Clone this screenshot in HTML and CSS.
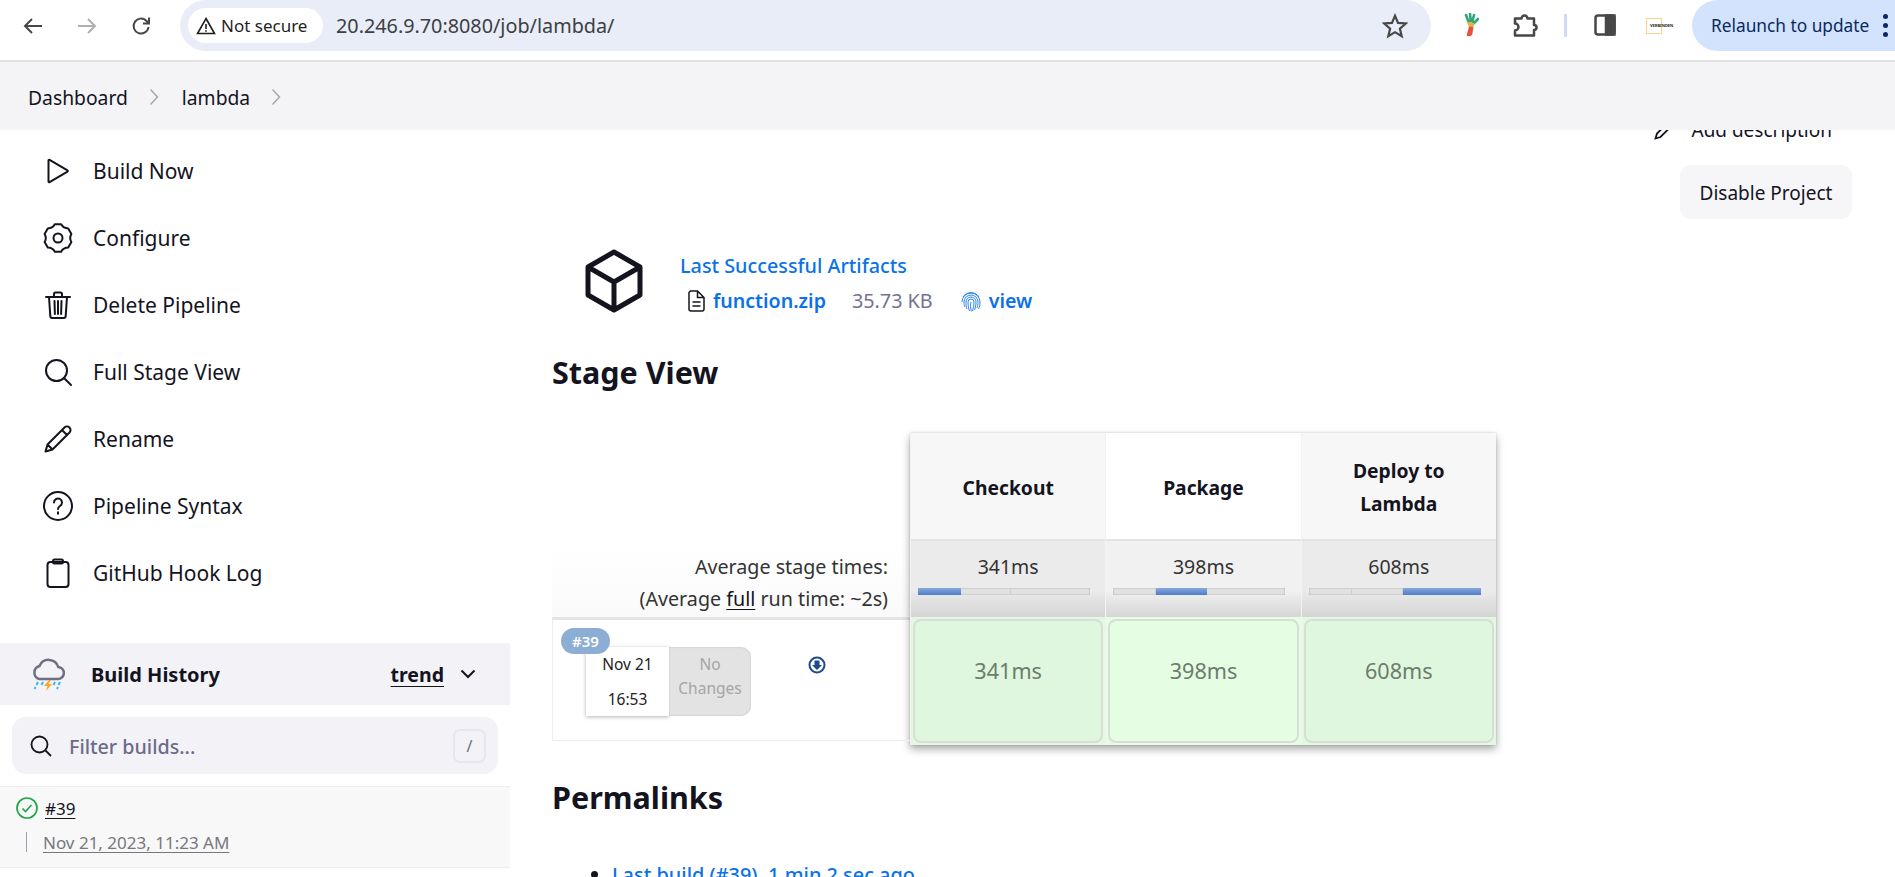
FILE: index.html
```html
<!DOCTYPE html>
<html lang="en">
  <head>
    <meta charset="UTF-8" />
    <meta name="viewport" content="width=device-width, initial-scale=1.0" />
    <title>lambda - Jenkins</title>
    <link rel="stylesheet" href="styles.css">
  </head>
  <body>
    <header class="toolbar">
      <svg class="tool-btn" viewBox="0 0 24 24"><path d="M21 12H4M11 5l-7 7 7 7" /></svg>
      <svg class="tool-btn tool-btn-off" viewBox="0 0 24 24"><path d="M3 12h17M13 5l7 7-7 7" /></svg>
      <svg class="tool-btn" viewBox="0 0 24 24"><path d="M19.5 13a7.5 7.5 0 1 1-2.2-6.3L20 9.5M20 3.5v6h-6" /></svg>
      <div class="omnibox">
        <div class="chip">
          <svg class="chip-icon" viewBox="0 0 20 20"><path d="M10 2.5 18.5 17.5H1.5zM10 8v5M10 14.3v1.4" /></svg>
          Not secure
        </div>
        <span class="url">20.246.9.70:8080/job/lambda/</span>
        <svg class="star" viewBox="0 0 24 24"><path d="M12 2.5l2.8 6.6 7.2.6-5.5 4.7 1.7 7-6.2-3.7-6.2 3.7 1.7-7L2 9.7l7.2-.6z" /></svg>
      </div>
      <svg class="ext-leek" viewBox="0 0 16 24">
        <path class="leek-green" d="M3 2l3 8M7 1l1 9M11 2l-2 8M15 6l-5 5" />
        <path class="leek-yellow" d="M6 10l1 5M8 10v5M10 11l-1 4" />
        <path class="leek-red" d="M7 15l-2 7M8 15l-1 7M9 15l-1 6" />
      </svg>
      <svg class="ext-puzzle" viewBox="0 0 25 24"><path d="M2 5.500h6.500a3 3 0 0 1 6 0H21v6.500a2.500 2.500 0 0 1 0 5V22.500H2v-5a3.500 3.500 0 0 0 0-7z" /></svg>
      <span class="tool-sep"></span>
      <svg class="side-panel" viewBox="0 0 22 22"><rect x="1.500" y="1.500" width="19" height="19" rx="2.500" /><rect class="side-fill" x="12" y="1.500" width="8.500" height="19" /></svg>
      <div class="ext-connect"><span class="connect-text">VERBINDEN</span></div>
      <div class="relaunch">
        Relaunch to update
        <span class="dots"><i></i><i></i><i></i></span>
      </div>
    </header>

    <nav class="crumbs">
      <a href="#">Dashboard</a>
      <svg class="crumb-sep" viewBox="0 0 10 18"><path d="M1.500 1.500 8.500 9l-7 7.500" /></svg>
      <a href="#">lambda</a>
      <svg class="crumb-sep" viewBox="0 0 10 18"><path d="M1.500 1.500 8.500 9l-7 7.500" /></svg>
    </nav>

    <div class="layout">
      <aside class="sidebar">
        <ul class="tasks">
          <li>
            <svg class="task-icon" viewBox="0 0 30 30"><path d="M5.500 4.500v21c0 .6.6.9 1.100.6L24.500 15.600c.5-.3.5-.9 0-1.200L6.600 3.900c-.5-.3-1.100 0-1.100.6z" /></svg>
            <a href="#">Build Now</a>
          </li>
          <li>
            <svg class="task-icon" viewBox="0 0 30 30"><path d="M11.850 1.360h6.300Q20.500 5.470 25.240 5.450l3.150 5.460Q26 15 28.390 19.090l-3.150 5.460Q20.500 24.530 18.150 28.640h-6.300Q9.500 24.530 4.760 24.550l-3.150-5.460Q4 15 1.610 10.910l3.150-5.460Q9.500 5.470 11.850 1.360z" /><circle cx="15" cy="15" r="4.500" /></svg>
            <a href="#">Configure</a>
          </li>
          <li>
            <svg class="task-icon" viewBox="0 0 30 30"><path d="M3 7h24M6 7l1.300 19a2 2 0 0 0 2 2h11.400a2 2 0 0 0 2-2L24 7M11 7V4a1.500 1.500 0 0 1 1.500-1.500h5A1.500 1.500 0 0 1 19 4v3M11.500 11l.4 13M15 11v13M18.500 11l-.4 13" /></svg>
            <a href="#">Delete Pipeline</a>
          </li>
          <li>
            <svg class="task-icon" viewBox="0 0 30 30"><circle cx="13.500" cy="13.500" r="10.500" /><path d="M21 21l7 7" /></svg>
            <a href="#">Full Stage View</a>
          </li>
          <li>
            <svg class="task-icon" viewBox="0 0 30 30"><path d="M2.500 27.500l2-7L21.500 3.500a3 3 0 0 1 5 5L9.500 25.500zM4.500 20.500l5 5M19 6l5 5" /></svg>
            <a href="#">Rename</a>
          </li>
          <li>
            <svg class="task-icon" viewBox="0 0 30 30"><circle cx="15" cy="15" r="14" /><path d="M11 11.500a4 4 0 1 1 6.200 3.300c-1.400 1-2.200 1.700-2.200 3.200M15 21.300v1.400" /></svg>
            <a href="#">Pipeline Syntax</a>
          </li>
          <li>
            <svg class="task-icon" viewBox="0 0 30 30"><rect x="4.500" y="4" width="21" height="25" rx="3" /><rect x="10" y="1.500" width="10" height="4" rx="1.500" /></svg>
            <a href="#">GitHub Hook Log</a>
          </li>
        </ul>

        <div class="history-head">
          <svg class="cloud" viewBox="0 0 34 33">
            <path class="cloud-line" d="M8 21h18.500a6 6 0 0 0 .8-12A10 10 0 0 0 8.500 8 6.800 6.800 0 0 0 8 21z" />
            <path class="cloud-rain" d="M7 24l-1.500 3M4.500 29l-1 2M12 24l-1.500 3M24 24l-1.500 3M29 24l-1.500 3M27 29l-1 2" />
            <path class="cloud-bolt" d="M18 22l-5 6h3.500L15 33l6-7h-3.500L20 22z" />
          </svg>
          <span class="history-title">Build History</span>
          <a class="trend" href="#">trend</a>
          <svg class="history-caret" viewBox="0 0 16 10"><path d="M1.500 1.500 8 8l6.500-6.500" /></svg>
        </div>

        <div class="filter">
          <svg class="filter-icon" viewBox="0 0 22 22"><circle cx="9.500" cy="9.500" r="8" /><path d="M15.500 15.500l5.500 5.500" /></svg>
          <span class="filter-text">Filter builds...</span>
          <span class="filter-key">/</span>
        </div>

        <div class="build-row">
          <div class="build-top">
            <svg class="build-status" viewBox="0 0 22 22"><circle cx="11" cy="11" r="10" /><path d="M6.500 11.500l3 3 6-6.500" /></svg>
            <a class="build-num" href="#">#39</a>
          </div>
          <div class="build-bottom">
            <span class="build-date">Nov 21, 2023, 11:23 AM</span>
          </div>
        </div>
      </aside>

      <main class="content">
        <div class="actions">
          <a class="add-desc" href="#">
            <svg class="add-desc-icon" viewBox="0 0 20 20"><path d="M1.500 18.500l1.500-5L14 2.500a2.500 2.500 0 0 1 3.500 3.500L6.500 17z" /></svg>
            Add description
          </a>
          <a class="btn" href="#">Disable Project</a>
        </div>

        <section class="artifacts">
          <svg class="cube" viewBox="0 0 58 64"><path d="M29 3 55 18v28L29 61 3 46V18zM3 18l26 15 26-15M29 33v28" /></svg>
          <div>
            <a class="art-title" href="#">Last Successful Artifacts</a>
            <div class="art-file">
              <svg class="file-icon" viewBox="0 0 17 22"><path d="M2.500 1h7L16 7.500V19a2 2 0 0 1-2 2H3a2 2 0 0 1-2-2V2.500zM9.500 1v6.500H16M4.500 12h8M4.500 16h8" /></svg>
              <a class="art-link" href="#">function.zip</a>
              <span class="art-size">35.73 KB</span>
              <svg class="print-icon" viewBox="0 0 20 22">
                <path d="M2 7a9.500 9.500 0 0 1 16 0M1 12a9 9 0 0 1 18 0c0 3-.5 5-1.500 7M4 17c-1-1.500-1-3.500-1-5a7 7 0 0 1 14 0c0 2.500-.5 4.500-1 6M6 19c-1-2-1-5-1-7a5 5 0 0 1 10 0c0 3-.5 5-1.500 8M8.500 21c-1-2.500-1.500-6-1.500-9a3 3 0 0 1 6 0c0 3-.5 6-1.500 9M10.500 21.500C9.500 18 9 15 10 12" />
              </svg>
              <a class="art-link" href="#">view</a>
            </div>
          </div>
        </section>

        <h2 class="section-title">Stage View</h2>

        <section class="stage">
          <div class="stage-left">
            <div class="avg-label">
              Average stage times:<br />
              (Average <a href="#">full</a> run time: ~2s)
            </div>
            <div class="run">
              <span class="run-badge">#39</span>
              <div class="run-date">
                <span>Nov 21</span>
                <span>16:53</span>
              </div>
              <div class="run-changes">No<br />Changes</div>
              <svg class="run-dl" viewBox="0 0 18 18"><circle cx="9" cy="9" r="7.500" /><path class="run-dl-arrow" d="M6.500 4.500h5V9H14l-5 5-5-5h2.500z" /></svg>
            </div>
          </div>

          <div class="stage-grid">
            <div class="col col-odd">
              <div class="col-head">Checkout</div>
              <div class="col-avg">
                341ms
                <div class="bar">
                  <span class="bar-seg bar-on bar-w-43"></span>
                  <span class="bar-seg bar-w-50"></span>
                  <span class="bar-seg bar-fill"></span>
                </div>
              </div>
              <div class="col-cell"><span class="cell-time">341ms</span></div>
            </div>
            <div class="col col-even">
              <div class="col-head">Package</div>
              <div class="col-avg">
                398ms
                <div class="bar">
                  <span class="bar-seg bar-w-43"></span>
                  <span class="bar-seg bar-on bar-w-51"></span>
                  <span class="bar-seg bar-fill"></span>
                </div>
              </div>
              <div class="col-cell"><span class="cell-time">398ms</span></div>
            </div>
            <div class="col col-odd">
              <div class="col-head">Deploy to<br />Lambda</div>
              <div class="col-avg">
                608ms
                <div class="bar">
                  <span class="bar-seg bar-w-43"></span>
                  <span class="bar-seg bar-w-51"></span>
                  <span class="bar-seg bar-on bar-fill"></span>
                </div>
              </div>
              <div class="col-cell"><span class="cell-time">608ms</span></div>
            </div>
          </div>
        </section>

        <h2 class="section-title permalinks-title">Permalinks</h2>
        <ul class="permalinks">
          <li><a href="#">Last build (#39), 1 min 2 sec ago</a></li>
        </ul>
      </main>
    </div>
  </body>
</html>
```

FILE: styles.css
```css
* {
  box-sizing: border-box;
}
html,
body {
  margin: 0;
  height: 877px;
  overflow: hidden;
}
body {
  font-family: "Noto Sans", "Open Sans", sans-serif;
  font-size: 19px;
  color: #14141f;
  background-color: #fff;
}
a {
  color: inherit;
  text-decoration: none;
}
ul {
  margin: 0;
  padding: 0;
  list-style: none;
}

/* browser toolbar */
.toolbar {
  display: flex;
  align-items: flex-start;
  height: 62px;
  padding-left: 21px;
  border-bottom: 2px solid #e1e1e1;
  overflow: hidden;
}
.tool-btn {
  flex: none;
  width: 24px;
  height: 24px;
  margin-top: 14px;
  margin-right: 30px;
  fill: none;
  stroke: #474747;
  stroke-width: 2;
}
.tool-btn-off {
  stroke: #b0b0b0;
}
.omnibox {
  flex: none;
  display: flex;
  align-items: center;
  width: 1251px;
  height: 51px;
  margin-left: -3px;
  padding-left: 8px;
  border-radius: 26px;
  background-color: #e9edf7;
}
.chip {
  display: flex;
  align-items: center;
  gap: 5px;
  width: 135px;
  height: 35px;
  padding-left: 8px;
  border-radius: 18px;
  background-color: #fff;
  font-size: 17px;
  color: #1f1f1f;
}
.chip-icon {
  flex: none;
  width: 20px;
  height: 20px;
  fill: none;
  stroke: #1f1f1f;
  stroke-width: 1.6;
}
.url {
  margin-left: 13px;
  font-size: 19.800px;
  color: #3c4043;
}
.star {
  width: 26px;
  height: 26px;
  margin-left: auto;
  margin-right: 23px;
  fill: none;
  stroke: #474747;
  stroke-width: 2;
}
.ext-leek {
  flex: none;
  width: 16px;
  height: 24px;
  margin: 13px 0 0 32px;
  fill: none;
  stroke-width: 2.600;
  stroke-linecap: round;
}
.leek-green {
  stroke: #2fa77a;
}
.leek-yellow {
  stroke: #d9b64a;
}
.leek-red {
  stroke: #e8503f;
}
.ext-puzzle {
  flex: none;
  width: 25px;
  height: 24px;
  margin: 13px 0 0 34px;
  fill: none;
  stroke: #474747;
  stroke-width: 2.500;
  stroke-linejoin: round;
}
.tool-sep {
  flex: none;
  width: 3px;
  height: 23px;
  margin: 14px 0 0 26px;
  background-color: #cfdcf8;
}
.side-panel {
  flex: none;
  width: 22px;
  height: 22px;
  margin: 14px 0 0 27px;
  fill: #fff;
  stroke: #474747;
  stroke-width: 2.500;
}
.side-fill {
  fill: #474747;
}
.ext-connect {
  flex: none;
  width: 16px;
  height: 16px;
  margin: 18px 14px 0 30px;
  border: 1px solid #fdd28a;
  white-space: nowrap;
}
.connect-text {
  display: block;
  margin: 4px 0 0 3px;
  font-size: 4px;
  line-height: 6px;
  font-weight: 700;
  color: #222;
}
.relaunch {
  flex: none;
  display: flex;
  align-items: center;
  width: 230px;
  height: 51px;
  margin-left: 16px;
  padding-left: 19px;
  border-radius: 26px;
  background-color: #d3e3fd;
  font-size: 17.300px;
  color: #0a2a5e;
}
.dots {
  display: flex;
  flex-direction: column;
  gap: 4px;
  margin-left: 14px;
}
.dots i {
  width: 5px;
  height: 5px;
  border-radius: 50%;
  background-color: #0a2a5e;
}

/* breadcrumbs */
.crumbs {
  position: relative;
  z-index: 2;
  display: flex;
  align-items: center;
  height: 68px;
  padding: 2px 0 0 28px;
  background-color: #f4f4f7;
  font-size: 19.300px;
}
.crumb-sep {
  width: 10px;
  height: 18px;
  margin: 0 23px 0 21px;
  fill: none;
  stroke: #a6a6b0;
  stroke-width: 1.500;
}

.layout {
  display: flex;
  height: 747px;
  overflow: hidden;
}

/* sidebar */
.sidebar {
  flex: none;
  width: 510px;
  padding-top: 7px;
}
.tasks li {
  display: flex;
  align-items: center;
  gap: 20px;
  height: 67px;
  padding-left: 43px;
  font-size: 21px;
}
.task-icon {
  flex: none;
  width: 30px;
  height: 30px;
  fill: none;
  stroke: #14141f;
  stroke-width: 2;
  stroke-linecap: round;
  stroke-linejoin: round;
}
.history-head {
  display: flex;
  align-items: center;
  height: 62px;
  margin-top: 37px;
  padding-left: 31px;
  background-color: #f2f2f7;
}
.cloud {
  flex: none;
  width: 34px;
  height: 33px;
  fill: none;
  stroke-width: 2;
}
.cloud-line {
  stroke: #6e6e85;
  stroke-width: 2.500;
}
.cloud-rain {
  stroke: #38b6f5;
}
.cloud-bolt {
  fill: #f9a825;
  stroke: none;
}
.history-title {
  margin-left: 26px;
  font-weight: 700;
  font-size: 20px;
}
.trend {
  margin-left: auto;
  font-weight: 700;
  font-size: 19.500px;
  text-decoration: underline;
  text-underline-offset: 4px;
}
.history-caret {
  width: 16px;
  height: 10px;
  margin: 0 34px 0 16px;
  fill: none;
  stroke: #14141f;
  stroke-width: 2;
}
.filter {
  display: flex;
  align-items: center;
  height: 57px;
  margin: 12px 12px 0;
  padding: 0 12px 0 18px;
  border-radius: 14px;
  background-color: #f2f2f7;
}
.filter-icon {
  flex: none;
  width: 22px;
  height: 22px;
  fill: none;
  stroke: #14141f;
  stroke-width: 1.800;
}
.filter-text {
  margin: 2px 0 0 17px;
  font-size: 19.700px;
  font-weight: 500;
  color: #6d6b8a;
}
.filter-key {
  display: flex;
  align-items: center;
  justify-content: center;
  width: 33px;
  height: 34px;
  margin-left: auto;
  border: 2px solid #e6e6f0;
  border-radius: 7px;
  font-size: 16px;
  color: #6d6b8a;
}
.build-row {
  height: 82px;
  margin-top: 12px;
  padding: 10px 0 0 16px;
  border-top: 1px solid #eee;
  border-bottom: 1px solid #eee;
  background-color: #f8f8f8;
}
.build-top {
  display: flex;
  align-items: center;
  gap: 7px;
  height: 22px;
}
.build-status {
  flex: none;
  width: 22px;
  height: 22px;
  fill: none;
  stroke: #1ea64b;
  stroke-width: 1.700;
}
.build-num {
  font-size: 17px;
  text-decoration: underline;
  text-underline-offset: 3px;
}
.build-bottom {
  height: 20px;
  margin: 13px 0 0 10px;
  padding-left: 16px;
  border-left: 1px solid #9aa5b1;
  display: flex;
  align-items: center;
}
.build-date {
  font-size: 17px;
  color: #777780;
  text-decoration: underline;
  text-underline-offset: 3px;
}

/* main column */
.content {
  flex: 1;
  padding: 0 43px 0 42px;
}
.actions {
  display: flex;
  flex-direction: column;
  align-items: flex-end;
  margin-top: -15px;
}
.add-desc {
  display: flex;
  align-items: center;
  gap: 17px;
  height: 30px;
  margin-right: 20px;
}
.add-desc-icon {
  width: 20px;
  height: 20px;
  fill: none;
  stroke: #14141f;
  stroke-width: 1.800;
}
.btn {
  display: flex;
  align-items: center;
  justify-content: center;
  width: 172px;
  height: 54px;
  margin-top: 20px;
  padding-top: 2px;
  border-radius: 11px;
  background-color: #f6f6f9;
}
.artifacts {
  display: flex;
  gap: 37px;
  margin: 29px 0 0 33px;
}
.cube {
  flex: none;
  width: 58px;
  height: 64px;
  margin-top: 1px;
  fill: none;
  stroke: #14141f;
  stroke-width: 5;
  stroke-linejoin: round;
}
.art-title {
  display: block;
  height: 35px;
  line-height: 35px;
  font-size: 19.800px;
  font-weight: 500;
  color: #0b72e7;
}
.art-file {
  display: flex;
  align-items: center;
  height: 35px;
  padding-left: 8px;
}
.file-icon {
  flex: none;
  width: 17px;
  height: 22px;
  fill: none;
  stroke: #14141f;
  stroke-width: 1.500;
}
.art-link {
  margin-left: 8px;
  font-size: 19.600px;
  font-weight: 600;
  color: #0b72e7;
}
.art-size {
  margin: 0 28px 0 26px;
  font-size: 19.800px;
  color: #737390;
}
.print-icon {
  flex: none;
  width: 20px;
  height: 22px;
  fill: none;
  stroke: #2a85ee;
  stroke-width: 1;
}
.section-title {
  margin: 34px 0 0;
  height: 40px;
  line-height: 40px;
  font-size: 30.500px;
  font-weight: 700;
}

/* stage view */
.stage {
  display: flex;
  height: 312px;
  margin-top: 41px;
}
.stage-left {
  flex: none;
  width: 358px;
  padding-top: 112px;
}
.avg-label {
  height: 75px;
  padding: 6px 22px 0 0;
  border-bottom: 3px solid #e4e4e4;
  background: linear-gradient(#fff, #fafafa);
  text-align: right;
  font-size: 19.700px;
  line-height: 32px;
  color: #333;
}
.avg-label a {
  color: #14141f;
  text-decoration: underline;
  text-underline-offset: 3px;
}
.run {
  position: relative;
  display: flex;
  align-items: flex-start;
  height: 121px;
  padding: 27px 0 0 33px;
  border: 1px solid #eee;
  border-top: 0;
  border-right: 0;
}
.run-badge {
  position: absolute;
  left: 8px;
  top: 8px;
  width: 49px;
  height: 26px;
  border-radius: 13px;
  background-color: #8cadd4;
  color: #fff;
  font-size: 15px;
  font-weight: 600;
  line-height: 26px;
  text-align: center;
}
.run-date {
  display: flex;
  flex-direction: column;
  align-items: center;
  justify-content: space-around;
  width: 83px;
  height: 69px;
  background-color: #fff;
  box-shadow: 0 1px 4px rgba(0, 0, 0, 0.3);
  font-size: 15.500px;
  color: #222;
}
.run-changes {
  width: 82px;
  height: 69px;
  padding-top: 5px;
  border-radius: 0 10px 10px 0;
  background-color: #e3e3e3;
  box-shadow: inset 0 0 2px rgba(0, 0, 0, 0.2);
  color: #a5a5a5;
  font-size: 15.500px;
  line-height: 24px;
  text-align: center;
}
.run-dl {
  width: 18px;
  height: 18px;
  margin: 9px 0 0 57px;
  fill: none;
  stroke: #1f4a8e;
  stroke-width: 2;
}
.run-dl-arrow {
  fill: #1f4a8e;
  stroke: none;
}
.stage-grid {
  flex: none;
  display: flex;
  width: 586px;
  box-shadow: 0 4px 8px rgba(0, 0, 0, 0.35), 0 0 2px rgba(0, 0, 0, 0.15);
}
.col {
  flex: 1;
  border-left: 1px solid #f2f2f2;
}
.col-head {
  display: flex;
  align-items: center;
  justify-content: center;
  height: 106px;
  padding-top: 2px;
  font-weight: 700;
  font-size: 19.300px;
  line-height: 33px;
  text-align: center;
}
.col-odd .col-head {
  background-color: #f7f7f7;
}
.col-avg {
  height: 78px;
  padding-top: 13px;
  border-top: 2px solid #e4e4e4;
  text-align: center;
  font-size: 19.500px;
  line-height: 26px;
  color: #333;
}
.col-odd .col-avg {
  background: linear-gradient(#ebebeb 65%, #d4d4d4);
}
.col-even .col-avg {
  background: linear-gradient(#f1f1f1 65%, #d6d6d6);
}
.bar {
  display: flex;
  width: 172px;
  height: 7px;
  margin: 8px 0 0 7px;
  box-shadow: inset 0 0 2px rgba(0, 0, 0, 0.3);
  background-color: #e2e2e2;
}
.bar-seg {
  height: 7px;
  border-right: 1px solid #cfcfcf;
}
.bar-on {
  background: linear-gradient(#88a9dc, #4d7cc8);
  border-right: 0;
}
.bar-w-43 {
  width: 43px;
}
.bar-w-50 {
  width: 50px;
}
.bar-w-51 {
  width: 51px;
}
.bar-fill {
  flex: 1;
  border-right: 0;
}
.col-cell {
  height: 128px;
  padding: 2px;
}
.col-odd .col-cell {
  background-color: #e2f8e0;
}
.col-even .col-cell {
  background-color: #e5fde2;
}
.cell-time {
  display: block;
  height: 124px;
  padding-top: 33px;
  border: 2px solid #d7dfd5;
  border-radius: 8px;
  text-align: center;
  font-size: 21.600px;
  line-height: 34px;
  color: #6e7c6e;
}
.col-odd .cell-time {
  background-color: #dff7de;
}
.permalinks-title {
  margin-top: 32px;
}
.permalinks {
  margin-top: 43px;
  padding-left: 60px;
  list-style: disc;
  font-size: 19.900px;
  line-height: 30px;
}
.permalinks a {
  color: #0b72e7;
  font-weight: 500;
}
```
